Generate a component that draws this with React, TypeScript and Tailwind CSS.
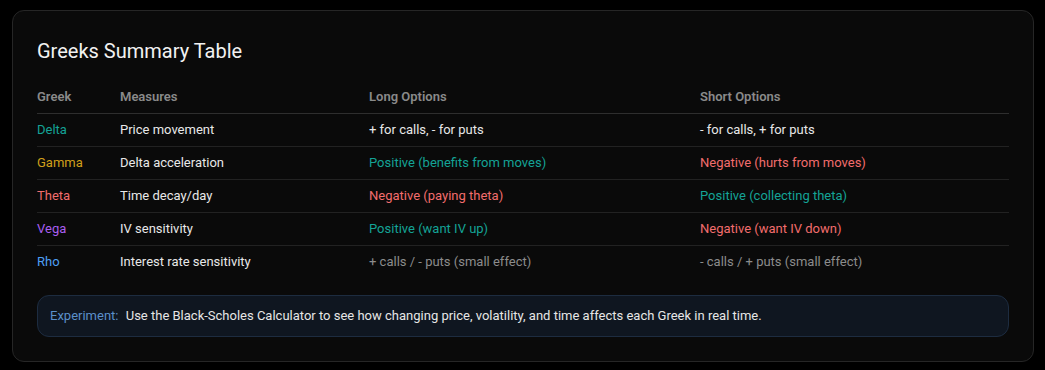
import React from "react";

type Row = {
  greek: string;
  greekClass: string;
  measures: string;
  long: string;
  longClass: string;
  short: string;
  shortClass: string;
};

const rows: Row[] = [
  {
    greek: "Delta",
    greekClass: "text-[#14a396]",
    measures: "Price movement",
    long: "+ for calls, - for puts",
    longClass: "text-[#e8e8e8]",
    short: "- for calls, + for puts",
    shortClass: "text-[#e8e8e8]",
  },
  {
    greek: "Gamma",
    greekClass: "text-[#d1a01a]",
    measures: "Delta acceleration",
    long: "Positive (benefits from moves)",
    longClass: "text-[#14a396]",
    short: "Negative (hurts from moves)",
    shortClass: "text-[#f26d6d]",
  },
  {
    greek: "Theta",
    greekClass: "text-[#f26d6d]",
    measures: "Time decay/day",
    long: "Negative (paying theta)",
    longClass: "text-[#f26d6d]",
    short: "Positive (collecting theta)",
    shortClass: "text-[#14a396]",
  },
  {
    greek: "Vega",
    greekClass: "text-[#a95ef0]",
    measures: "IV sensitivity",
    long: "Positive (want IV up)",
    longClass: "text-[#14a396]",
    short: "Negative (want IV down)",
    shortClass: "text-[#f26d6d]",
  },
  {
    greek: "Rho",
    greekClass: "text-[#4d9ff5]",
    measures: "Interest rate sensitivity",
    long: "+ calls / - puts (small effect)",
    longClass: "text-[#8c8c8c]",
    short: "- calls / + puts (small effect)",
    shortClass: "text-[#8c8c8c]",
  },
];

export default function App() {
  return (
    <div
      className="min-h-screen bg-black pl-3 pr-[11px] pt-2.5 pb-[9px]"
      style={{ fontFamily: "Roboto, 'Noto Sans', sans-serif" }}
    >
      <div className="rounded-xl border border-[#262626] bg-[#0a0a0a] px-6 pt-[26px] pb-6">
        <h2 className="text-xl leading-7 text-[#f2f2f2] mb-4">Greeks Summary Table</h2>

        <div className="text-[13px] leading-5">
          <div className="grid grid-cols-[83px_249px_331px_1fr] border-b border-[#2e2e2e] py-1.5 font-semibold text-[#8a8a8a]">
            <div>Greek</div>
            <div>Measures</div>
            <div>Long Options</div>
            <div>Short Options</div>
          </div>
          {rows.map((r, i) => (
            <div
              key={r.greek}
              className={`grid grid-cols-[83px_249px_331px_1fr] py-1.5 ${
                i < rows.length - 1 ? "border-b border-[#222222]" : "pb-[7px]"
              }`}
            >
              <div className={r.greekClass}>{r.greek}</div>
              <div className="text-[#e8e8e8]">{r.measures}</div>
              <div className={r.longClass}>{r.long}</div>
              <div className={r.shortClass}>{r.short}</div>
            </div>
          ))}
        </div>

        <div className="mt-4 rounded-xl border border-[#1d2c40] bg-[#0f1620] px-3 py-2.5 text-[13px] leading-5 text-[#e6e6e6]">
          <span className="text-[#5b8fc9] mr-1">Experiment:</span> Use the Black-Scholes
          Calculator to see how changing price, volatility, and time affects each Greek in real
          time.
        </div>
      </div>
    </div>
  );
}
